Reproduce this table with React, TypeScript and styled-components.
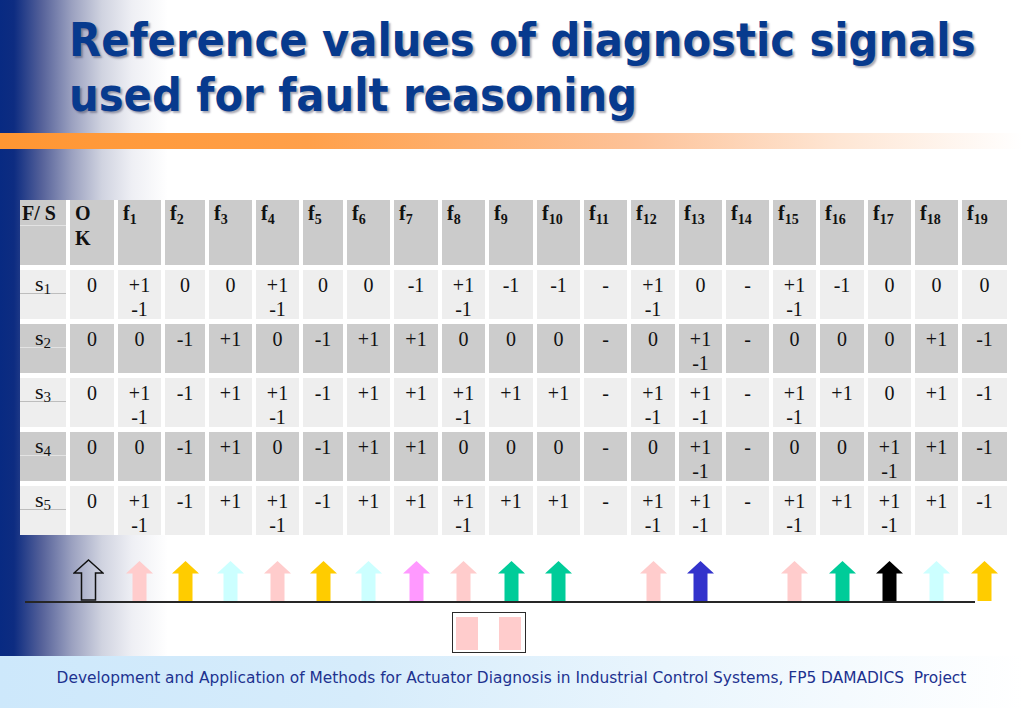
import React from 'react';
import styled, { createGlobalStyle } from 'styled-components';

const Global = createGlobalStyle`
  html, body { margin: 0; padding: 0; background: #ffffff; }
  body { width: 1023px; height: 708px; overflow: hidden; }
`;

const COLS =
  '46px 44px 43px 40px 43px 43px 40px 43px 44px 43px 44px 43px 43px 44px 43px 43px 43px 44px 43px 43px 45px';

const Slide = styled.div`
  width: 1023px;
  height: 708px;
  display: flex;
  flex-direction: column;
  background: #ffffff;
`;

const Main = styled.div`
  flex: 1;
  display: flex;
  flex-direction: column;
  background: linear-gradient(
    90deg,
    #082a82 0px,
    #0d2c81 14px,
    #56629a 42px,
    #9ba1c0 72px,
    #d0d3e0 102px,
    #eeeff4 132px,
    #ffffff 168px
  );
`;

const Title = styled.h1`
  margin: 0;
  height: 133px;
  box-sizing: border-box;
  padding: 13px 0 0 69px;
  font-family: "DejaVu Sans Condensed", "DejaVu Sans", sans-serif;
  font-weight: 700;
  font-size: 46.4px;
  line-height: 55px;
  color: #073a8e;
  text-shadow: 2px 2px 2px rgba(40, 40, 70, 0.4);
`;

const TitleLine = styled.span`
  display: block;
  white-space: nowrap;
`;

const OrangeBar = styled.div`
  height: 16px;
  background: linear-gradient(90deg, #ff9632 0%, #ffa04a 30%, #fdc298 62%, #fee6d4 82%, #ffffff 100%);
`;

const Table = styled.div`
  margin: 51px 0 0 20px;
  width: 987px;
  display: grid;
  grid-template-columns: ${COLS};
  grid-template-rows: 65px repeat(5, 49px);
  column-gap: 4px;
  row-gap: 5px;
  background: #ffffff;
  font-family: "Liberation Serif", "Times New Roman", serif;
  font-size: 20px;
  color: #111111;
`;

const HeadCell = styled.div`
  background: #cbcbcb;
  box-sizing: border-box;
  padding: 1px 0 0 5px;
  line-height: 25px;
  font-weight: 700;
  text-align: left;
`;

const LabelCell = styled.div<{ $tone: 'head' | 'light' | 'dark' }>`
  display: grid;
  grid-template-rows: ${(p) => (p.$tone === 'head' ? '26px' : '24px')} 1fr;
  background: ${(p) => (p.$tone === 'light' ? '#eeeeee' : '#cbcbcb')};
`;

const LabelTop = styled.div<{ $tone: 'head' | 'light' | 'dark'; $head?: boolean }>`
  box-sizing: border-box;
  border-bottom: 1px solid ${(p) => (p.$tone === 'light' ? '#bdbdbd' : '#e3e3e3')};
  padding: ${(p) => (p.$head ? '1px 0 0 2px' : '2px 0 0 0')};
  line-height: ${(p) => (p.$head ? '25px' : '24px')};
  font-size: ${(p) => (p.$head ? '20px' : '22px')};
  font-weight: ${(p) => (p.$head ? 700 : 400)};
  text-align: ${(p) => (p.$head ? 'left' : 'center')};
  white-space: nowrap;
`;

const ValueCell = styled.div<{ $tone: 'light' | 'dark' }>`
  background: ${(p) => (p.$tone === 'light' ? '#eeeeee' : '#cccccc')};
  box-sizing: border-box;
  padding-top: 3px;
  line-height: 24px;
  text-align: center;
  white-space: nowrap;
`;

const ValueLine = styled.div`
  display: block;
`;

const Sub = styled.sub<{ $size: number; $drop: number }>`
  font-size: ${(p) => p.$size}px;
  line-height: 0;
  vertical-align: -${(p) => p.$drop}px;
`;

const ArrowRow = styled.div`
  margin: 25px 0 0 20px;
  width: 987px;
  height: 41px;
  display: grid;
  grid-template-columns: ${COLS};
  column-gap: 4px;
  align-items: end;
`;

const ArrowSlot = styled.div`
  display: flex;
  justify-content: center;
  align-items: flex-end;
  height: 41px;
`;

const ArrowSvg = styled.svg<{ $shift?: number }>`
  display: block;
  margin-right: ${(p) => p.$shift ?? 0}px;
`;

const BaseLine = styled.div`
  margin-left: 25px;
  width: 950px;
  height: 2px;
  background: #262626;
`;

const LegendBox = styled.div`
  margin: 9px 0 0 452px;
  width: 74px;
  height: 41px;
  box-sizing: border-box;
  border: 1.5px solid #2a2a2a;
  padding: 4px 0 0 3px;
  display: flex;
  gap: 21px;
`;

const LegendSwatch = styled.div`
  width: 22px;
  height: 33px;
  background: #ffcccc;
`;

const Footer = styled.footer`
  height: 52px;
  box-sizing: border-box;
  padding-top: 12px;
  background: linear-gradient(90deg, #cde8fb 0%, #d6ecfb 35%, #e9f5fd 65%, #ffffff 100%);
  font-family: "DejaVu Sans", sans-serif;
  font-size: 15.4px;
  line-height: 20px;
  color: #1d3290;
  text-align: center;
  white-space: pre;
`;

type Val = string;
const PM = 'pm';

const rows: { label: string; tone: 'light' | 'dark'; vals: Val[] }[] = [
  {
    label: '1',
    tone: 'light',
    vals: ['0', PM, '0', '0', PM, '0', '0', '-1', PM, '-1', '-1', '-', PM, '0', '-', PM, '-1', '0', '0', '0'],
  },
  {
    label: '2',
    tone: 'dark',
    vals: ['0', '0', '-1', '+1', '0', '-1', '+1', '+1', '0', '0', '0', '-', '0', PM, '-', '0', '0', '0', '+1', '-1'],
  },
  {
    label: '3',
    tone: 'light',
    vals: ['0', PM, '-1', '+1', PM, '-1', '+1', '+1', PM, '+1', '+1', '-', PM, PM, '-', PM, '+1', '0', '+1', '-1'],
  },
  {
    label: '4',
    tone: 'dark',
    vals: ['0', '0', '-1', '+1', '0', '-1', '+1', '+1', '0', '0', '0', '-', '0', PM, '-', '0', '0', PM, '+1', '-1'],
  },
  {
    label: '5',
    tone: 'light',
    vals: ['0', PM, '-1', '+1', PM, '-1', '+1', '+1', PM, '+1', '+1', '-', PM, PM, '-', PM, '+1', PM, '+1', '-1'],
  },
];

const arrows: (string | null)[] = [
  'hollow',
  '#ffcccc',
  '#ffcc00',
  '#ccffff',
  '#ffcccc',
  '#ffcc00',
  '#ccffff',
  '#ff99ff',
  '#ffcccc',
  '#00cc99',
  '#00cc99',
  null,
  '#ffcccc',
  '#3333cc',
  null,
  '#ffcccc',
  '#00cc99',
  '#000000',
  '#ccffff',
  '#ffcc00',
];

const Arrow: React.FC<{ color: string }> = ({ color }) => {
  if (color === 'hollow') {
    return (
      <ArrowSvg $shift={8} width="31" height="42" viewBox="0 0 31 42">
        <polygon
          points="15.5,1 30,14 22.5,14 22.5,41 8.5,41 8.5,14 1,14"
          fill="none"
          stroke="#111"
          strokeWidth="1.5"
          strokeLinejoin="miter"
        />
      </ArrowSvg>
    );
  }
  return (
    <ArrowSvg width="27" height="40" viewBox="0 0 27 40">
      <polygon points="13.5,0 27,12.5 20.5,12.5 20.5,40 6.5,40 6.5,12.5 0,12.5" fill={color} />
    </ArrowSvg>
  );
};

const renderValue = (v: Val) =>
  v === PM ? (
    <>
      <ValueLine>+1</ValueLine>
      <ValueLine>-1</ValueLine>
    </>
  ) : (
    <ValueLine>{v}</ValueLine>
  );

export default function App() {
  return (
    <>
      <Global />
      <Slide>
        <Main>
          <Title>
            <TitleLine>Reference values of diagnostic signals</TitleLine>
            <TitleLine>used for fault reasoning</TitleLine>
          </Title>
          <OrangeBar />
          <Table>
            <LabelCell $tone="head">
              <LabelTop $tone="head" $head>
                F/ S
              </LabelTop>
            </LabelCell>
            <HeadCell>
              O
              <br />K
            </HeadCell>
            {Array.from({ length: 19 }, (_, i) => (
              <HeadCell key={`h${i}`}>
                f<Sub $size={14} $drop={4}>{i + 1}</Sub>
              </HeadCell>
            ))}
            {rows.map((r) => (
              <React.Fragment key={r.label}>
                <LabelCell $tone={r.tone}>
                  <LabelTop $tone={r.tone}>
                    s<Sub $size={15} $drop={3}>{r.label}</Sub>
                  </LabelTop>
                </LabelCell>
                {r.vals.map((v, j) => (
                  <ValueCell key={j} $tone={r.tone}>
                    {renderValue(v)}
                  </ValueCell>
                ))}
              </React.Fragment>
            ))}
          </Table>
          <ArrowRow>
            <ArrowSlot />
            {arrows.map((c, i) => (
              <ArrowSlot key={i}>{c ? <Arrow color={c} /> : null}</ArrowSlot>
            ))}
          </ArrowRow>
          <BaseLine />
          <LegendBox>
            <LegendSwatch />
            <LegendSwatch />
          </LegendBox>
        </Main>
        <Footer>
          {'Development and Application of Methods for Actuator Diagnosis in Industrial Control Systems, FP5 DAMADICS  Project'}
        </Footer>
      </Slide>
    </>
  );
}
